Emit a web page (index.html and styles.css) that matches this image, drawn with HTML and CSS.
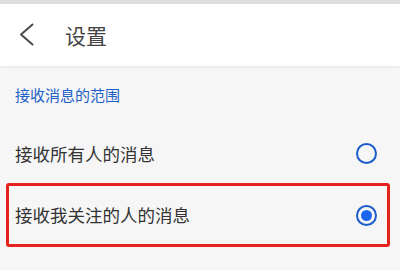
FILE: index.html
```html
<!DOCTYPE html>
<html lang="zh-CN">
<head>
<meta charset="utf-8">
<link rel="stylesheet" href="styles.css">
</head>
<body>
<div class="topbar"></div>
<header class="header">
  <svg class="back" width="15" height="23" viewBox="0 0 15 23"><polyline points="13.5,1.5 2,11.5 13.5,21.5" fill="none" stroke="#4a4a4a" stroke-width="2" stroke-linecap="round" stroke-linejoin="round"/></svg>
  <span class="title">设置</span>
</header>
<div class="section-title">接收消息的范围</div>
<div class="row">
  <span class="label">接收所有人的消息</span>
  <span class="radio"></span>
</div>
<div class="row row-selected">
  <span class="label">接收我关注的人的消息</span>
  <span class="radio radio-on"></span>
</div>
</body>
</html>
```
FILE: styles.css
```css
html, body {
  margin: 0;
  padding: 0;
}
body {
  width: 400px;
  height: 270px;
  overflow: hidden;
  background: #f6f6f6;
  font-family: "Noto Sans CJK SC", "Noto Sans", sans-serif;
}
.topbar {
  height: 4px;
  background: #dedede;
}
.header {
  height: 62px;
  background: #ffffff;
  display: flex;
  align-items: center;
  box-shadow: 0 1px 3px rgba(0, 0, 0, 0.07);
  position: relative;
}
.back {
  margin-left: 19px;
  margin-top: -1px;
}
.title {
  margin-left: 31px;
  font-size: 21px;
  color: #444444;
  line-height: 1;
}
.section-title {
  height: 58px;
  line-height: 58px;
  padding-left: 15px;
  font-size: 15px;
  color: #1e5fc8;
}
.row {
  height: 59px;
  display: flex;
  align-items: center;
  justify-content: space-between;
  padding: 0 23px 0 15px;
}
.label {
  font-size: 17.5px;
  color: #333333;
  line-height: 1;
}
.row-selected {
  box-sizing: border-box;
  height: 64px;
  width: 384px;
  margin-left: 6px;
  border: 3px solid #e5231c;
  border-radius: 3px;
  padding: 0 10px 0 6px;
}
.radio {
  box-sizing: border-box;
  width: 21px;
  height: 21px;
  border: 2px solid #1b5ccb;
  border-radius: 50%;
  display: flex;
  align-items: center;
  justify-content: center;
}
.radio-on::after {
  content: "";
  width: 11px;
  height: 11px;
  border-radius: 50%;
  background: #1a66ee;
}
```
